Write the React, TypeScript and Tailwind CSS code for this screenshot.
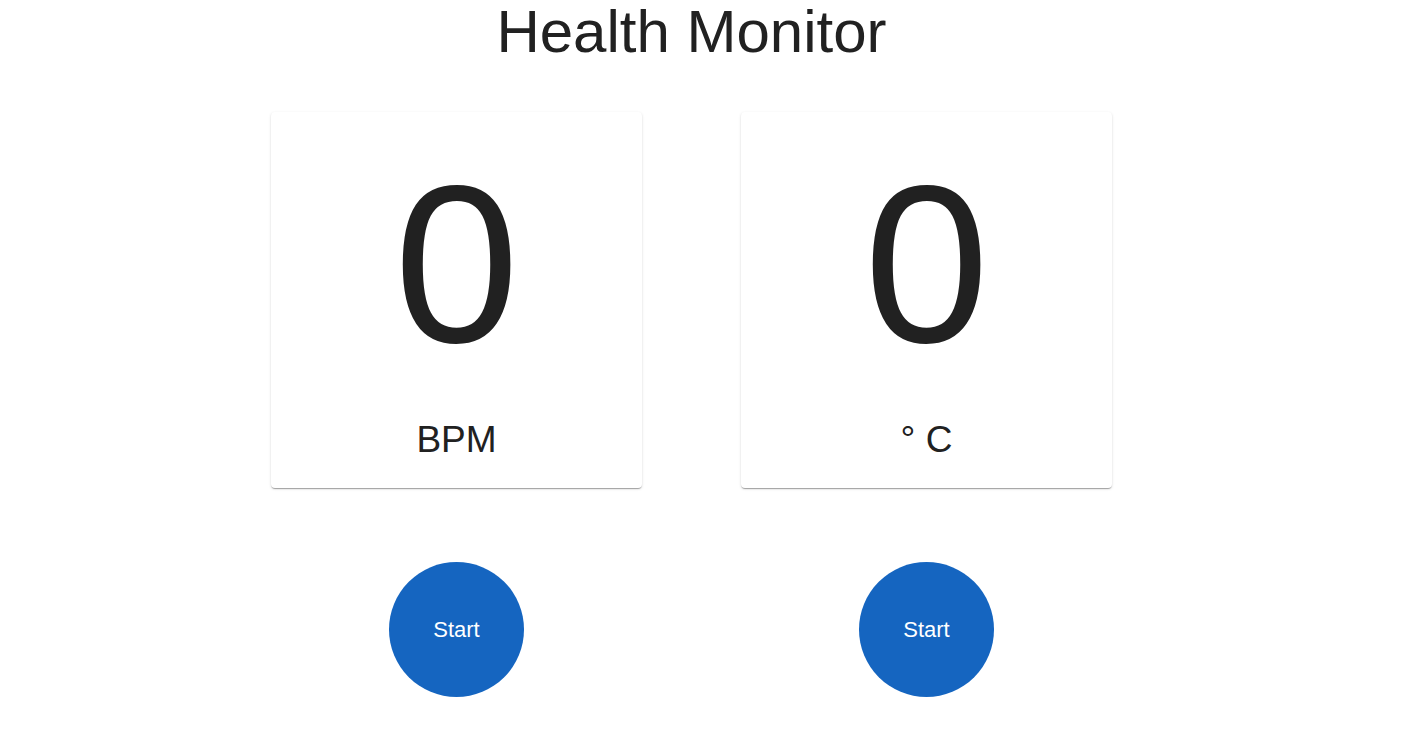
export default function App() {
  const monitors = [
    { value: "0", unit: "BPM" },
    { value: "0", unit: "° C" },
  ];

  return (
    <div className="min-h-screen bg-white pr-[33px] font-['Liberation_Sans',Arial,sans-serif] text-[#212121]">
      <h1 className="text-center text-[60px] leading-[64px] font-normal">Health Monitor</h1>

      <div className="mt-[48px] flex justify-center gap-[99px]">
        {monitors.map((m, i) => (
          <div key={i} className="flex w-[371px] flex-col items-center">
            {/* Reading card */}
            <div className="flex w-full flex-col items-center rounded bg-white pt-[40px] pb-[30px] shadow-[0px_2px_1px_-1px_rgba(0,0,0,0.2),0px_1px_1px_0px_rgba(0,0,0,0.14),0px_1px_3px_0px_rgba(0,0,0,0.12)]">
              <div className="text-[225px] leading-[225px]">{m.value}</div>
              <div className="mt-[44px] text-[37px] leading-[37px]">{m.unit}</div>
            </div>

            <button className="mt-[74px] flex h-[135px] w-[135px] items-center justify-center rounded-full bg-[#1565C0] text-[22px] text-white">
              Start
            </button>
          </div>
        ))}
      </div>
    </div>
  );
}
